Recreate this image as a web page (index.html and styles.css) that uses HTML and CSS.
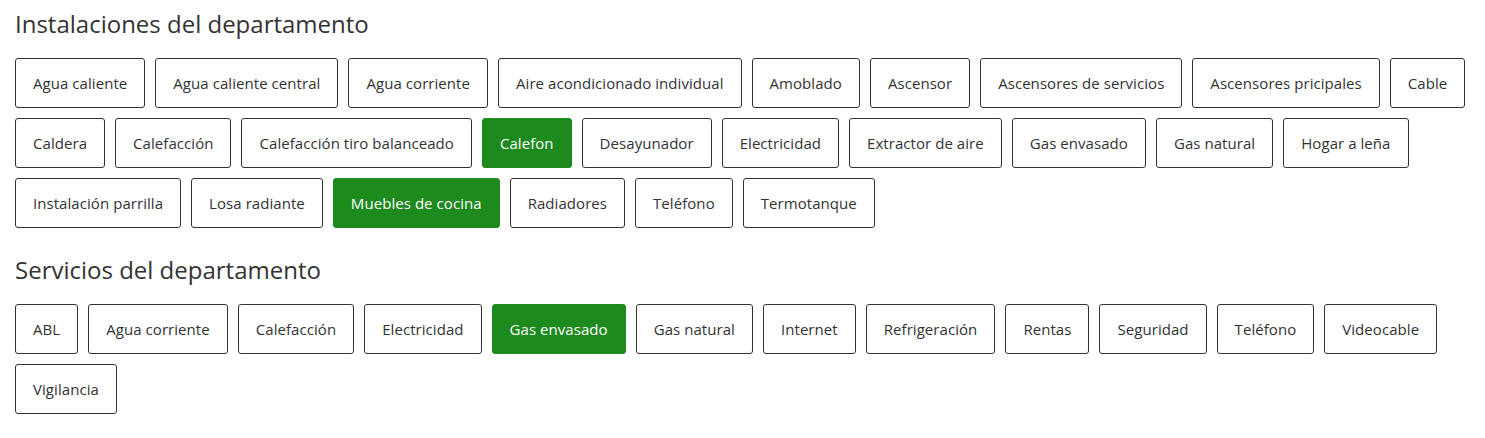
FILE: index.html
```html
<!DOCTYPE html>
<html lang="es">
<head>
<meta charset="utf-8">
<title>Departamento</title>
<link rel="stylesheet" href="styles.css">
</head>
<body>
<div class="page">
  <section class="group">
    <h2 class="group-title">Instalaciones del departamento</h2>
    <div class="chips">
      <button class="chip">Agua caliente</button>
      <button class="chip">Agua caliente central</button>
      <button class="chip">Agua corriente</button>
      <button class="chip">Aire acondicionado individual</button>
      <button class="chip">Amoblado</button>
      <button class="chip">Ascensor</button>
      <button class="chip">Ascensores de servicios</button>
      <button class="chip">Ascensores pricipales</button>
      <button class="chip">Cable</button>
      <button class="chip">Caldera</button>
      <button class="chip">Calefacción</button>
      <button class="chip">Calefacción tiro balanceado</button>
      <button class="chip chip-active">Calefon</button>
      <button class="chip">Desayunador</button>
      <button class="chip">Electricidad</button>
      <button class="chip">Extractor de aire</button>
      <button class="chip">Gas envasado</button>
      <button class="chip">Gas natural</button>
      <button class="chip">Hogar a leña</button>
      <button class="chip">Instalación parrilla</button>
      <button class="chip">Losa radiante</button>
      <button class="chip chip-active">Muebles de cocina</button>
      <button class="chip">Radiadores</button>
      <button class="chip">Teléfono</button>
      <button class="chip">Termotanque</button>
    </div>
  </section>
  <section class="group">
    <h2 class="group-title">Servicios del departamento</h2>
    <div class="chips">
      <button class="chip">ABL</button>
      <button class="chip">Agua corriente</button>
      <button class="chip">Calefacción</button>
      <button class="chip">Electricidad</button>
      <button class="chip chip-active">Gas envasado</button>
      <button class="chip">Gas natural</button>
      <button class="chip">Internet</button>
      <button class="chip">Refrigeración</button>
      <button class="chip">Rentas</button>
      <button class="chip">Seguridad</button>
      <button class="chip">Teléfono</button>
      <button class="chip">Videocable</button>
      <button class="chip">Vigilancia</button>
    </div>
  </section>
</div>
</body>
</html>
```

FILE: styles.css
```css
html, body {
  margin: 0;
  padding: 0;
  background: #ffffff;
}

body {
  font-family: "Open Sans", "Liberation Sans", sans-serif;
  color: #333333;
}

.page {
  padding: 7px 0 0 15px;
  display: flex;
  flex-direction: column;
  gap: 25px;
}

.group-title {
  margin: 0 0 17px 0;
  font-size: 24px;
  line-height: 34px;
  font-weight: 400;
  color: #333333;
}

.chips {
  display: flex;
  flex-wrap: wrap;
  gap: 10px;
}

.chip {
  font-family: inherit;
  font-size: 15px;
  line-height: 20px;
  letter-spacing: 0.06px;
  padding: 14px 17px;
  border: 1px solid #333333;
  border-radius: 3px;
  background: #ffffff;
  color: #333333;
  cursor: pointer;
}

.chip-active {
  background: #1d8a1d;
  border-color: #1d8a1d;
  color: #ffffff;
}
```
